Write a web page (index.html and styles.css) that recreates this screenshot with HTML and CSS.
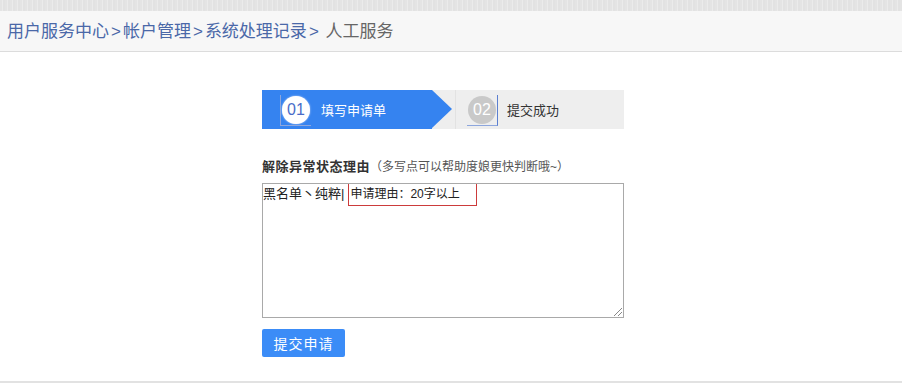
FILE: index.html
```html
<!DOCTYPE html>
<html lang="zh-CN">
<head>
  <meta charset="UTF-8">
  <title>人工服务</title>
  <link rel="stylesheet" href="styles.css">
</head>
<body>
  <div class="top-strip"></div>
  <div class="crumb-bar">
    <a href="#">用户服务中心</a><span class="sep">&gt;</span><a href="#">帐户管理</a><span class="sep">&gt;</span><a href="#">系统处理记录</a><span class="sep">&gt;</span> <span class="current">人工服务</span>
  </div>

  <div class="page">
    <div class="form-box">
      <div class="steps">
        <div class="step active">
          <span class="num">01</span>
          <span class="step-text">填写申请单</span>
        </div>
        <div class="step">
          <span class="num">02</span>
          <span class="step-text">提交成功</span>
        </div>
      </div>

      <div class="field-label"><b>解除异常状态理由</b><span class="hint">（多写点可以帮助度娘更快判断哦~）</span></div>
      <div class="reason">
        <span>黑名单丶纯粹|</span><span class="mark">申请理由：20字以上</span>
        <span class="grip"></span>
      </div>

      <button class="submit">提交申请</button>
    </div>
  </div>
</body>
</html>
```
FILE: styles.css
```css
body {
  margin: 0;
  font-family: "Liberation Sans", "Noto Sans CJK SC", sans-serif;
  color: #333;
  background: #fff;
}
.top-strip {
  height: 11px;
  background: repeating-linear-gradient(90deg, #e4e4e4 0 2px, #ebebeb 2px 3px, #e2e2e2 3px 5px);
}
.crumb-bar {
  height: 40px;
  line-height: 42px;
  padding-left: 7px;
  background: #f7f7f7;
  border-bottom: 1px solid #dcdcdc;
  font-size: 17px;
  color: #4a68a8;
}
.crumb-bar a {
  color: #4a68a8;
  text-decoration: none;
}
.crumb-bar .sep {
  padding: 0 2px;
}
.crumb-bar .current {
  color: #666;
}
.page {
  border-bottom: 2px solid #e2e2e2;
  padding: 38px 0 24px;
}
.form-box {
  width: 362px;
  margin-left: 262px;
}
.steps {
  display: flex;
  height: 39px;
  background: #eeeeee;
}
.step {
  position: relative;
  display: flex;
  align-items: center;
  font-size: 13px;
  color: #333;
}
.step .num {
  position: relative;
  width: 28px;
  height: 28px;
  border-radius: 50%;
  background: #c9c9c9;
  color: #fff;
  font-size: 16px;
  line-height: 28px;
  text-align: center;
}
.step .num::after {
  content: "";
  position: absolute;
  right: -2px;
  bottom: -2px;
  width: 30px;
  height: 30px;
  border-right: 1px solid #5b7fd0;
  border-bottom: 1px solid #8da6dd;
}
.step .step-text {
  margin-left: 11px;
}
.step.active {
  width: 170px;
  padding-left: 20px;
  box-sizing: border-box;
  background: #3583f0;
  color: #fff;
}
.step.active::after {
  content: "";
  position: absolute;
  right: -20px;
  top: 0;
  border-left: 20px solid #3583f0;
  border-top: 19.5px solid transparent;
  border-bottom: 19.5px solid transparent;
}
.step.active .num {
  background: #fff;
  color: #4a6cc8;
  box-shadow: 0 0 2px #cfd9f5;
}
.step.active .num::after {
  right: auto;
  left: -2px;
  border-right: none;
  border-left: 1px solid #8da6dd;
}
.step.active + .step {
  flex: 1;
  padding-left: 36px;
}
.step.active + .step::before {
  content: "";
  position: absolute;
  left: 23px;
  top: 0;
  bottom: 0;
  border-left: 1px solid #e2e2e2;
}
.field-label {
  margin-top: 29px;
  font-size: 13px;
  line-height: 18px;
  color: #333;
}
.field-label b {
  letter-spacing: 0.5px;
}
.field-label .hint {
  color: #555;
  font-size: 12px;
}
.reason {
  position: relative;
  height: 133px;
  margin-top: 7px;
  border: 1px solid #a9a9a9;
  font-size: 13px;
  line-height: 20px;
  color: #222;
}
.reason .mark {
  display: inline-block;
  margin-left: 4px;
  padding: 0 16px 0 1px;
  border: 1px solid #cc3b3b;
  border-top: none;
  margin-top: -1px;
  font-size: 12px;
  line-height: 21px;
}
.reason .grip {
  position: absolute;
  right: 1px;
  bottom: 1px;
  width: 8px;
  height: 8px;
  background: linear-gradient(135deg, transparent 45%, #888 45% 55%, transparent 55% 70%, #888 70% 80%, transparent 80%);
}
.submit {
  display: block;
  width: 83px;
  height: 28px;
  margin-top: 11px;
  border: none;
  border-radius: 2px;
  background: #3b8cf7;
  color: #fff;
  font-size: 14px;
  font-family: inherit;
  letter-spacing: 1px;
  cursor: pointer;
}
```
